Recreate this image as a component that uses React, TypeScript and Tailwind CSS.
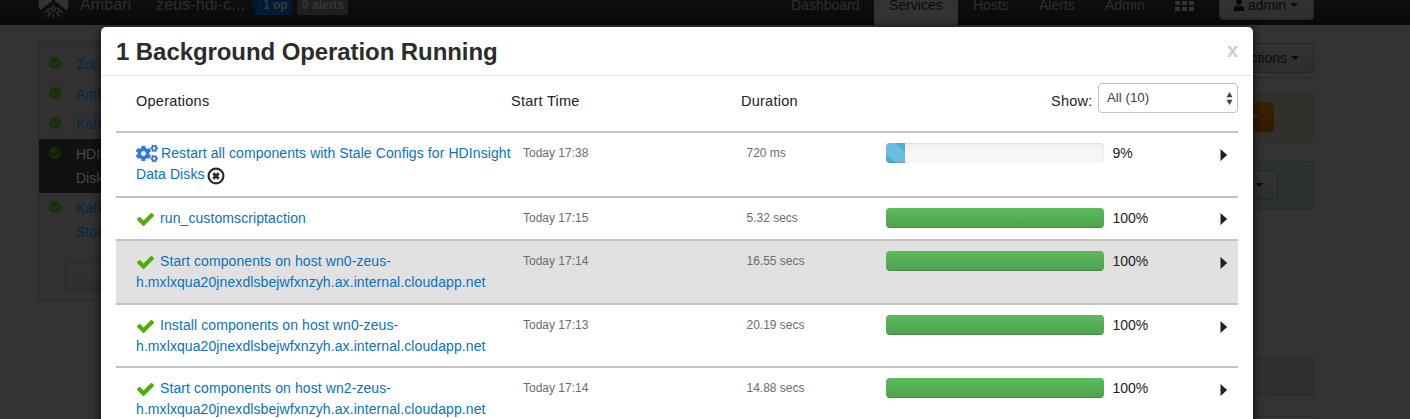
import { FaCheckCircle, FaCogs, FaUser } from "react-icons/fa";

type Operation = {
  name: string;
  tail?: string;
  start: string;
  duration: string;
  progress: number;
  height: string;
  running?: boolean;
  hovered?: boolean;
};

const operations: Operation[] = [
  { name: "Restart all components with Stale Configs for HDInsight", tail: "Data Disks", start: "Today 17:38", duration: "720 ms", progress: 9, height: "h-[65px]", running: true },
  { name: "run_customscriptaction", start: "Today 17:15", duration: "5.32 secs", progress: 100, height: "h-[43px]" },
  { name: "Start components on host wn0-zeus-", tail: "h.mxlxqua20jnexdlsbejwfxnzyh.ax.internal.cloudapp.net", start: "Today 17:14", duration: "16.55 secs", progress: 100, height: "h-[64px]", hovered: true },
  { name: "Install components on host wn0-zeus-", tail: "h.mxlxqua20jnexdlsbejwfxnzyh.ax.internal.cloudapp.net", start: "Today 17:13", duration: "20.19 secs", progress: 100, height: "h-[63px]" },
  { name: "Start components on host wn2-zeus-", tail: "h.mxlxqua20jnexdlsbejwfxnzyh.ax.internal.cloudapp.net", start: "Today 17:14", duration: "14.88 secs", progress: 100, height: "h-[64px]" },
];

const services = [
  { name: "Zoo" },
  { name: "Amb" },
  { name: "Kafk" },
  { name: "HDIn", second: "Disk", active: true },
  { name: "Kafk", second: "Stor" },
];

function Caret({ className = "" }: { className?: string }) {
  return (
    <svg className={`h-[4px] w-[8px] shrink-0 ${className}`} viewBox="0 0 8 4" fill="currentColor">
      <path d="M0 0 H8 L4 4 Z" />
    </svg>
  );
}

function Logo() {
  return (
    <svg className="h-[31px] w-[31px] shrink-0" viewBox="0 0 31 31">
      <circle cx="15.5" cy="15.5" r="15" fill="#333333" />
      <path d="M14 0 H17 V13 L31 24 L26 31 H5 L0 24 L14 13 Z" fill="#0d0d0d" />
      <g fill="none" stroke="#2e2e2e" strokeWidth="1.5">
        <path d="M15.5 18 L17.8 21 L15.5 23.5 L13.2 21 Z" />
        <path d="M11.5 20 L6.5 25 M19.5 20 L24.5 25 M13 24.5 L9.5 28.5 M18 24.5 L21.5 28.5 M15.5 26 V30" />
        <path d="M9 22 L12 25 M22 22 L19 25" />
      </g>
    </svg>
  );
}

function GridIcon() {
  return (
    <svg className="mt-[7px] h-[16px] w-[19px] shrink-0" viewBox="0 0 19 16" fill="#333333">
      {[0, 6, 12].map((y) =>
        [0, 7, 14].map((x) => <rect key={`${x}-${y}`} x={x} y={y} width="5" height="4" rx="0.8" />)
      )}
    </svg>
  );
}

function NavBar() {
  return (
    <header className="h-[25px] overflow-hidden bg-linear-to-b from-[#0e0e0e] to-[#090909] text-[14px] text-[#2f2f2f]">
      <div className="-mt-3 flex h-[37px] whitespace-nowrap pl-[38px] *:shrink-0">
        <Logo />
        <span className="ml-[11px] mt-[4px] w-[76px] text-[16px] leading-[25px] tracking-[0.1px]">Ambari</span>
        <span className="mt-[4px] w-[94px] text-[16px] leading-[25px] tracking-[0.15px]">zeus-hdi-c...</span>
        <svg className="mt-[6px] h-[20px] w-[5px]" viewBox="0 0 5 20">
          <path d="M5 4 L1 10 L5 16 Z" fill="#001a38" />
        </svg>
        <span className="h-[27px] w-[37px] rounded-[3px] bg-[#001a38] pl-[8px] pt-[7px] text-[12px] font-bold leading-[20px] text-[#3a3a3a]">1 op</span>
        <span className="ml-[5px] h-[27px] w-[51px] rounded-[3px] bg-[#1f1f1f] pl-[5px] pt-[7px] text-[12px] font-bold leading-[20px] text-[#363636]">0 alerts</span>
        <nav className="ml-[443px] flex h-full leading-[34px]">
          <span className="w-[83px]">Dashboard</span>
          <span className="w-[84px] bg-[#333333] pl-[15px] text-[#0a0a0a]">Services</span>
          <span className="w-[81px] pl-[15px]">Hosts</span>
          <span className="w-[66px]">Alerts</span>
          <span className="w-[70px]">Admin</span>
          <GridIcon />
        </nav>
        <span className="ml-[25px] flex h-[32px] w-[95px] items-center rounded-[4px] border border-[#262626] bg-linear-to-b from-[#333333] to-[#2f2f2f] pl-[13px] pt-[2px] text-[#080808]">
          <FaUser className="mr-[3px] h-[12px] w-[12px]" />
          admin
          <Caret className="ml-[4px]" />
        </span>
      </div>
    </header>
  );
}

function Sidebar() {
  return (
    <aside className="mt-[15px] h-[261px] w-[240px] border border-[#2b2b2b] bg-[#313131] pt-[8px] text-[14px]">
      {services.map((s, i) => (
        <div key={i} className={s.active ? "flex h-[54px] bg-[#111111] pl-[10px] pt-[3px] text-[#4a4a4a]" : "flex pb-[3px] pl-[10px] pt-[3px] text-[#002a47]"}>
          <FaCheckCircle className={s.active ? "mr-[15px] mt-[5px] size-[12px] shrink-0 text-[#152c00]" : "mr-[15px] mt-[5px] size-[12px] shrink-0 text-[#163200]"} />
          <span className="leading-[24px]">
            {s.name}
            {s.second && <span className="block">{s.second}</span>}
          </span>
        </div>
      ))}
      <div className="ml-[26px] mt-[15px] h-[30px] w-[150px] rounded-[4px] border border-[#272727] bg-linear-to-b from-[#333333] to-[#2e2e2e]" />
    </aside>
  );
}

function PageContent() {
  return (
    <main className="flex w-[1000px] flex-col text-[14px] text-[#0a0a0a]">
      <div className="ml-auto mt-[18px] flex h-[30px] w-[90px] items-center justify-end rounded-[4px] border border-[#262626] bg-linear-to-b from-[#333333] to-[#2d2d2d] pr-[14px]">
        Actions
        <Caret className="ml-[4px]" />
      </div>
      <div className="mt-[4px] border-b border-[#292929]" />
      <div className="mt-[15px] flex h-[48px] justify-end rounded-[4px] border border-[#302c25] bg-[#32302c] pr-[39px] pt-[8px]">
        <div className="flex h-[30px] w-[80px] items-center justify-end rounded-[4px] bg-linear-to-b from-[#3a2200] to-[#311900] pr-[15px] text-[#333333]">
          <Caret />
        </div>
      </div>
      <div className="mt-[20px] flex h-[48px] justify-end rounded-[4px] border border-[#252d30] bg-[#2b3031] pr-[35px] pt-[8px]">
        <div className="flex h-[30px] w-[80px] items-center justify-end rounded-[4px] border border-[#262626] bg-linear-to-b from-[#333333] to-[#2e2e2e] pr-[14px]">
          <Caret />
        </div>
      </div>
      <div className="mt-[149px] h-[38px] border border-[#2b2b2b] bg-[#303030]" />
      <div className="mt-[20px] border-b border-[#2b2b2b]" />
    </main>
  );
}

function ProgressBar({ value, running }: { value: number; running?: boolean }) {
  return (
    <div className="mt-[10px] h-[20px] w-[218px] shrink-0 overflow-hidden rounded-[4px] bg-linear-to-b from-[#f3f3f3] to-[#f8f8f8] shadow-[inset_0_1px_2px_rgba(0,0,0,0.1)]">
      <div
        className={
          running
            ? "h-full max-w-[19px] bg-[#4bb1d6] bg-[linear-gradient(45deg,rgba(255,255,255,0.18)_25%,transparent_25%,transparent_50%,rgba(255,255,255,0.18)_50%,rgba(255,255,255,0.18)_75%,transparent_75%)] bg-[length:40px_40px] bg-[position:-10px_0px] shadow-[inset_0_-1px_0_rgba(0,0,0,0.15)]"
            : "h-full bg-linear-to-b from-[#5bbc5b] to-[#4fa24f] shadow-[inset_0_-1px_0_rgba(0,0,0,0.15)]"
        }
        style={{ width: `${value}%` }}
      />
    </div>
  );
}

function CheckIcon() {
  return (
    <svg className="ml-px mr-[6px] mt-[5px] h-[13px] w-[17px] shrink-0" viewBox="121 334 1550 1188" fill="#4fae0b">
      <path d="M1671 566q0 40-28 68l-724 724-136 136q-28 28-68 28t-68-28l-136-136-362-362q-28-28-28-68t28-68l136-136q28-28 68-28t68 28l294 295 656-657q28-28 68-28t68 28l136 136q28 28 28 68z" />
    </svg>
  );
}

function CancelIcon() {
  return (
    <svg className="ml-[2px] inline-block size-[18px] align-[-6px]" viewBox="0 0 18 18" fill="none">
      <circle cx="9" cy="9" r="7.4" stroke="#2b2b2b" strokeWidth="2.2" />
      <path d="M6.3 6.3 L11.7 11.7 M11.7 6.3 L6.3 11.7" stroke="#2b2b2b" strokeWidth="3" />
    </svg>
  );
}

function OperationRow({ op }: { op: Operation }) {
  return (
    <div className={`flex border-t-2 border-[#c3c3c3] pl-[20px] ${op.height} ${op.hovered ? "bg-[#e1e1e1]" : "bg-white"}`}>
      <div className="w-[387px] shrink-0 whitespace-nowrap pt-[10px] text-[14px] leading-[21px] tracking-[0.09px] text-[#0a72bb]">
        <div className="flex h-[21px]">
          {op.running ? <FaCogs className="mr-[3px] h-[21px] w-[22px] text-[#3079e4]" /> : <CheckIcon />}
          <a>{op.name}</a>
        </div>
        <a>{op.tail}</a>
        {op.running && <CancelIcon />}
      </div>
      <span className="w-[223.5px] shrink-0 pt-[10px] text-[12px] leading-[20px] text-[#6c6c6c]">{op.start}</span>
      <span className="w-[139.5px] shrink-0 pt-[10px] text-[12px] leading-[20px] text-[#6c6c6c]">{op.duration}</span>
      <ProgressBar value={op.progress} running={op.running} />
      <span className="ml-[8.5px] w-[107.5px] shrink-0 pt-[10px] text-[14px] leading-[20px] text-[#222222]">{op.progress}%</span>
      <svg className={op.tail ? "mt-[15.5px] h-[12px] w-[8px]" : "mt-[14.5px] h-[12px] w-[8px]"} viewBox="0 0 8 12">
        <path d="M0.5 0 L7.2 6 L0.5 12 Z" fill="#222222" />
      </svg>
    </div>
  );
}

export default function App() {
  return (
    <div className="relative h-[419px] w-[1410px] overflow-hidden bg-[#333333] font-['Liberation_Sans',Arial,sans-serif]">
      <NavBar />
      <div className="flex justify-between pl-[38px] pr-[96px]">
        <Sidebar />
        <PageContent />
      </div>
      <section className="absolute left-[101px] top-[27px] h-[450px] w-[1152px] rounded-[5px] bg-white text-[#2c2c2c] shadow-[0_2px_10px_1px_rgba(0,0,0,0.7)]">
        <div className="flex h-[49px] justify-between border-b border-[#e8e8e8] pl-[15px] pr-[15px]">
          <h1 className="pt-[5px] text-[24px] font-bold leading-[40px] tracking-[-0.08px]">1 Background Operation Running</h1>
          <button className="h-[46px] text-[20px] font-bold leading-[46px] text-[#cccccc]">x</button>
        </div>
        <div className="mx-[15px]">
          <div className="flex h-[55px] pl-[20px] text-[14.5px] leading-[20px] tracking-[0.25px] text-[#222222]">
            <span className="w-[375px] pt-[15px]">Operations</span>
            <span className="w-[230px] pt-[15px]">Start Time</span>
            <span className="w-[310px] pt-[15px]">Duration</span>
            <span className="w-[47px] pt-[15px]">Show:</span>
            <div className="mt-[7px] flex h-[30px] w-[140px] justify-between rounded-[4px] border border-[#c3c3c3] pl-[8px] pr-[4px] text-[13.3px] tracking-normal text-[#444444]">
              <span className="pt-[4px]">All (10)</span>
              <svg className="mt-[8px] h-[13px] w-[7px]" viewBox="0 0 7 13" fill="#444444">
                <path d="M3.5 0 L6.5 5.2 L0.5 5.2 Z M0.5 7.8 L6.5 7.8 L3.5 13 Z" />
              </svg>
            </div>
          </div>
          {operations.map((op, i) => (
            <OperationRow key={i} op={op} />
          ))}
        </div>
      </section>
    </div>
  );
}
